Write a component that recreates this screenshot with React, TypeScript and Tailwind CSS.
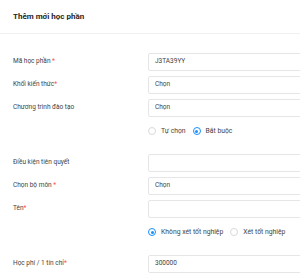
import * as React from 'react'

type Field = {
  label: string
  req?: '' | ' '
  value?: string
}

function Req({ sp }: { sp: string }) {
  return (
    <span className="text-[#ff4d4f]">
      {sp}*
    </span>
  )
}

function Row({ label, req, value }: Field) {
  return (
    <div className="flex items-center h-[18px]">
      <div className="w-[135px] shrink-0 text-[6.5px] text-[#434343]">
        {label}
        {req !== undefined && <Req sp={req} />}
      </div>
      <div className="w-[180px] shrink-0 h-[18px] border border-[#e6e6e6] rounded-[2px] flex items-center px-[6px] text-[6.5px] text-[#434343]">
        {value}
      </div>
    </div>
  )
}

function Radio({ label, checked }: { label: string; checked?: boolean }) {
  return (
    <label className="flex items-center gap-[5px] text-[6.8px] text-[#434343]">
      <span
        className={
          checked
            ? 'w-[8px] h-[8px] rounded-full border border-[#1890ff] flex items-center justify-center'
            : 'w-[8px] h-[8px] rounded-full border border-[#d9d9d9]'
        }
      >
        {checked && <span className="w-[3px] h-[3px] rounded-full bg-[#1890ff]" />}
      </span>
      {label}
    </label>
  )
}

function RadioRow({ items }: { items: { label: string; checked?: boolean }[] }) {
  return (
    <div className="flex items-center h-[18px] mb-[9px]">
      <div className="w-[135px] shrink-0" />
      <div className="flex items-center gap-[7px]">
        {items.map((it) => (
          <Radio key={it.label} label={it.label} checked={it.checked} />
        ))}
      </div>
    </div>
  )
}

export default function App() {
  return (
    <div className="w-[300px] h-[276px] overflow-hidden bg-white font-['Roboto',sans-serif]">
      <div className="h-[34px] border-b border-[#f0f0f0] flex items-center px-[13px]">
        <h1 className="text-[8px] font-bold text-[#262626]">Thêm mới học phần</h1>
      </div>
      <div className="pl-[13px] pt-[19px] flex flex-col gap-[5px]">
        <Row label="Mã học phần" req=" " value="J3TA39YY" />
        <Row label="Khối kiến thức" req="" value="Chọn" />
        <Row label="Chương trình đào tạo" value="Chọn" />
        <RadioRow items={[{ label: 'Tự chọn' }, { label: 'Bắt buộc', checked: true }]} />
        <Row label="Điều kiện tiên quyết" />
        <Row label="Chọn bộ môn" req=" " value="Chọn" />
        <Row label="Tên" req="" />
        <RadioRow
          items={[{ label: 'Không xét tốt nghiệp', checked: true }, { label: 'Xét tốt nghiệp' }]}
        />
        <Row label="Học phí / 1 tín chỉ" req="" value="300000" />
      </div>
    </div>
  )
}
